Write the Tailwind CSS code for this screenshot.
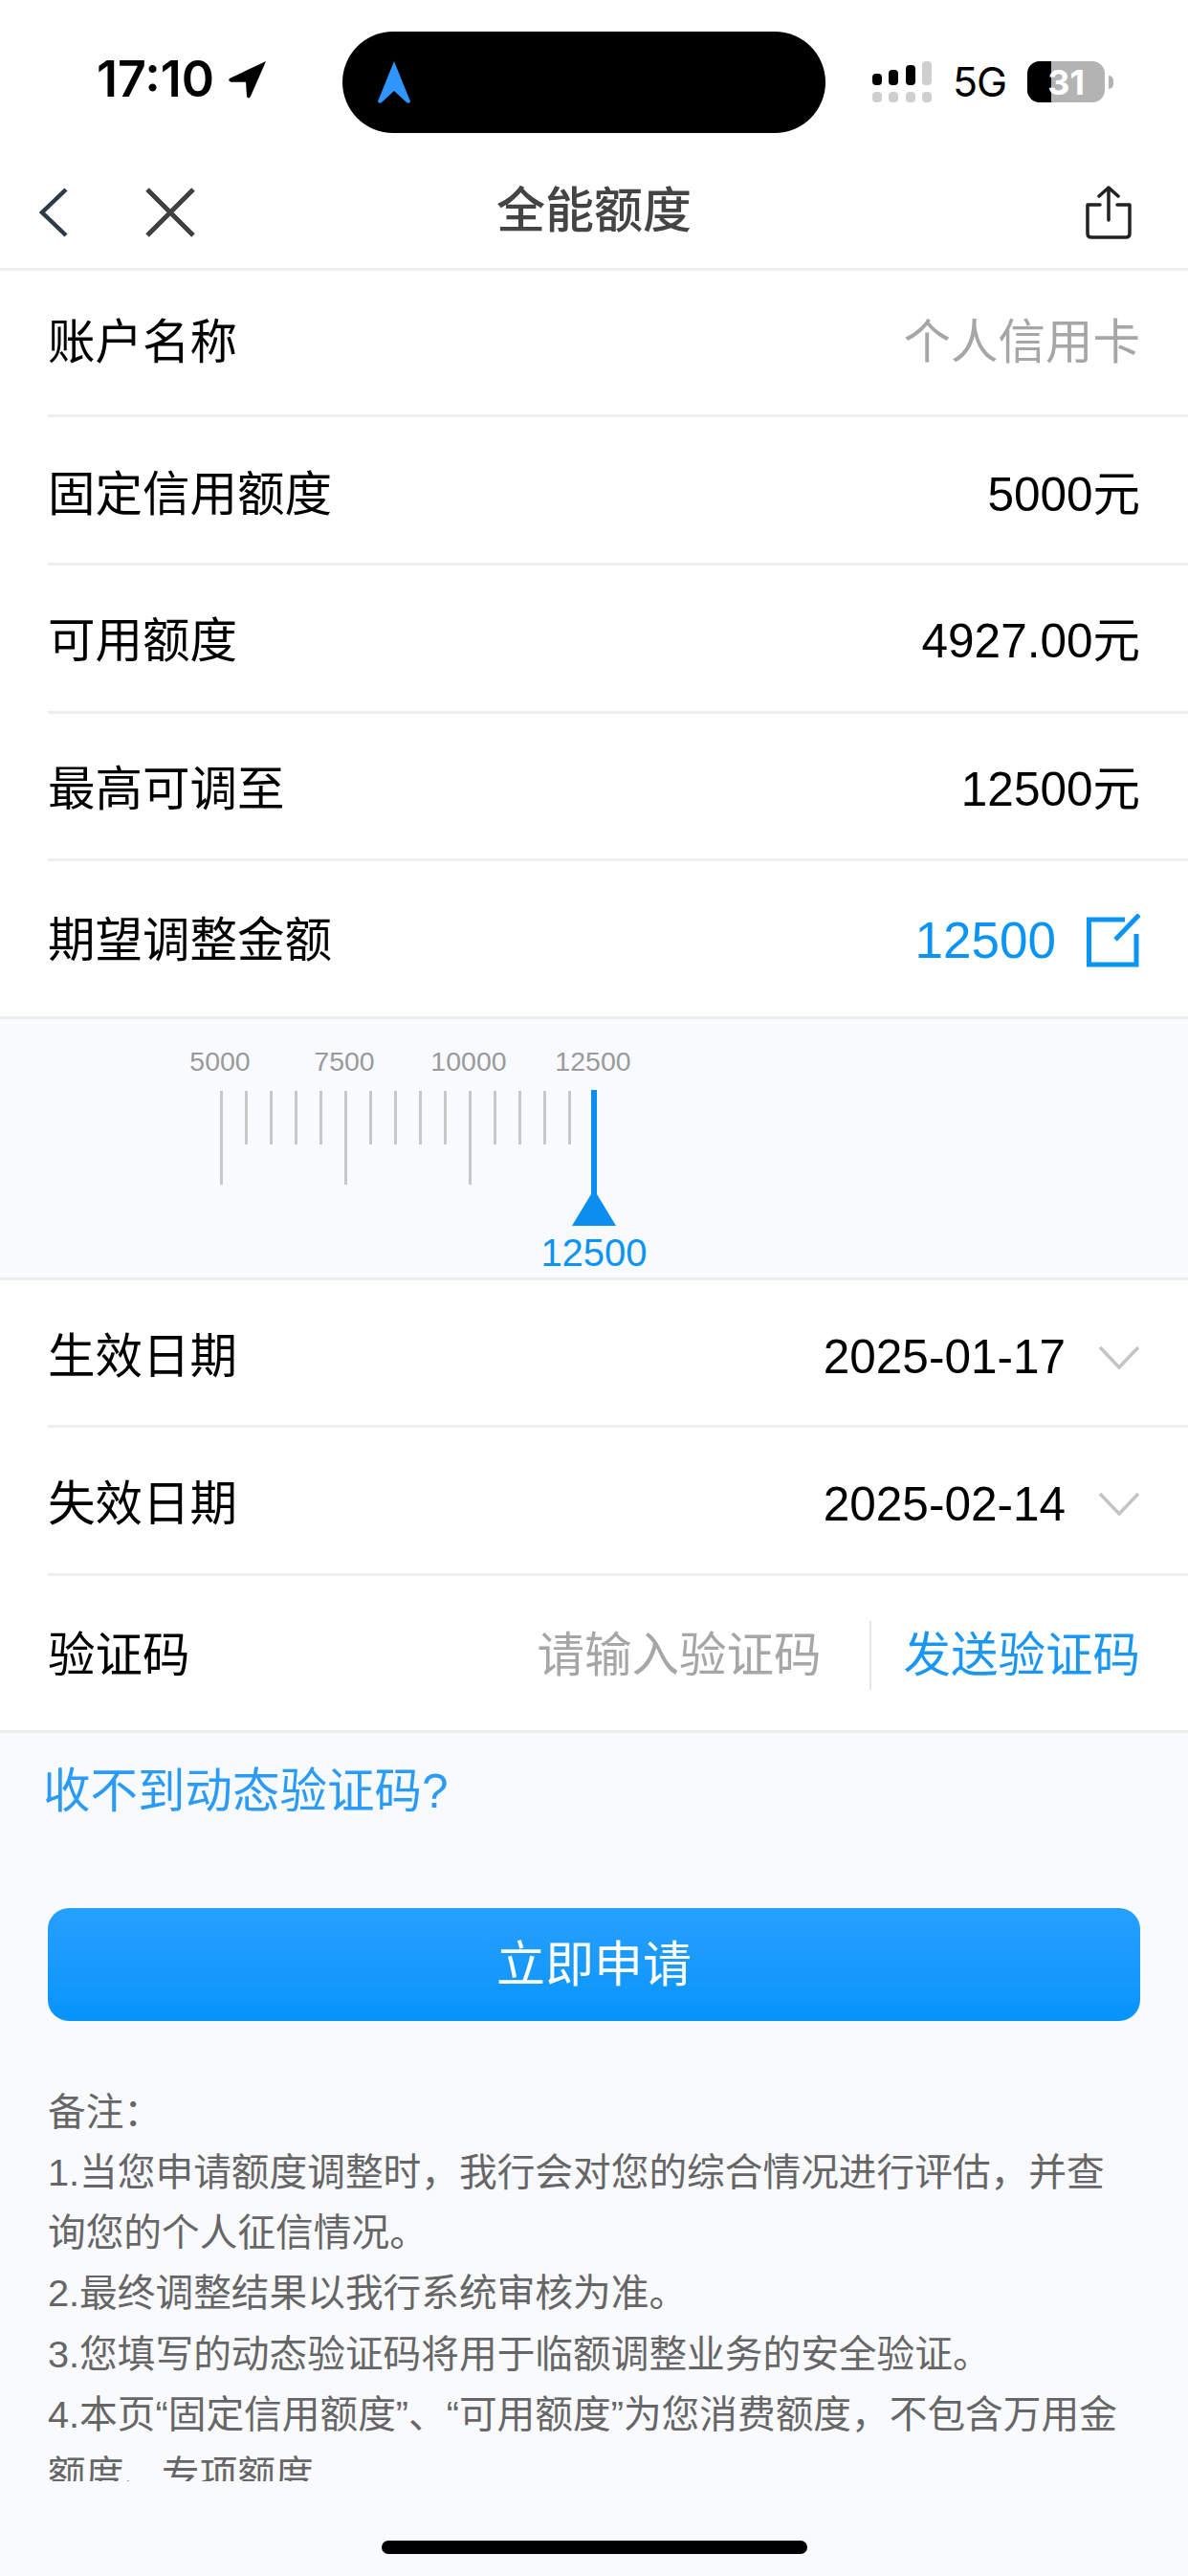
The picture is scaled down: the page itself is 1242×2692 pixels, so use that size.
<!DOCTYPE html>
<html lang="zh-CN">
<head>
    <meta charset="UTF-8">
    <title>全能额度</title>
    <script src="https://cdn.jsdelivr.net/npm/@tailwindcss/browser@4"></script>
</head>
<body class="m-0 bg-[#f9fafe] font-['Liberation_Sans','Noto_Sans_CJK_SC',sans-serif] text-black">
<div class="relative w-[1242px] h-[2692px] overflow-hidden flex flex-col">

    <!-- Status bar -->
    <div class="bg-white h-[165px] shrink-0 flex items-center pl-[101px] pr-[78px] pt-[6px] font-['Inter',sans-serif]">
        <span class="text-[52px] font-semibold leading-none w-[138px] -mt-[6px]">17:10</span>
        <svg class="w-[42px] h-[42px] -ml-[1px] -mt-[6px]" viewBox="0 0 44 44"><path d="M42 2 L2 21 Q0 24 4 25 L20 25 L21 41 Q23 44 25 41 Z" fill="#000"/></svg>
        <div class="ml-[78px] w-[506px] h-[106px] rounded-[53px] bg-black flex items-center pl-[34px]">
            <svg class="w-[40px] h-[46px]" viewBox="0 0 40 46"><path d="M20 1 L37 43 Q36 46 33 44 L20 32 L7 44 Q4 46 3 43 Z" fill="#2f96ff"/></svg>
        </div>
        <div class="ml-[49px] w-[62px] h-[43px] flex justify-between">
            <div class="w-[10px] h-full flex flex-col justify-end gap-[7px]"><div class="h-[12px] rounded-[4px] bg-black"></div><div class="h-[11px] rounded-[4px] bg-[#cfcfcf]"></div></div>
            <div class="w-[10px] h-full flex flex-col justify-end gap-[7px]"><div class="h-[16px] rounded-[4px] bg-black"></div><div class="h-[11px] rounded-[4px] bg-[#cfcfcf]"></div></div>
            <div class="w-[10px] h-full flex flex-col justify-end gap-[7px]"><div class="h-[21px] rounded-[4px] bg-black"></div><div class="h-[11px] rounded-[4px] bg-[#cfcfcf]"></div></div>
            <div class="w-[10px] h-full flex flex-col justify-end gap-[7px]"><div class="h-[25px] rounded-[4px] bg-[#cfcfcf]"></div><div class="h-[11px] rounded-[4px] bg-[#cfcfcf]"></div></div>
        </div>
        <span class="ml-[22px] text-[43px] font-normal leading-none tracking-[-1px]">5G</span>
        <div class="relative ml-[22px] w-[81px] h-[43px] rounded-[13px] overflow-hidden bg-[#b3b3b3] flex items-center justify-center">
            <div class="absolute left-0 top-0 bottom-0 w-[25px] bg-black"></div>
            <span class="relative text-white text-[36px] font-bold leading-none">31</span>
        </div>
        <div class="ml-[4px] w-[5px] h-[14px] rounded-r-[5px] bg-[#b3b3b3]"></div>
    </div>

    <!-- Nav bar -->
    <div class="relative bg-white h-[118px] shrink-0 flex items-center justify-between pl-[40px] pr-[58px] pb-[2px] border-b-[3px] border-[#eeeeee]">
        <div class="flex items-center gap-[80px]">
            <svg class="w-[32px] h-[52px]" viewBox="0 0 32 52" fill="none" stroke="#2c3a4b" stroke-width="4.5"><path d="M29 2 L4 26 L29 50"/></svg>
            <svg class="w-[52px] h-[52px]" viewBox="0 0 52 52" fill="none" stroke="#404040" stroke-width="5"><path d="M2 2 L50 50 M50 2 L2 50"/></svg>
        </div>
        <span class="absolute left-0 right-0 text-center text-[#444444] text-[51px] font-medium leading-none pb-[2px]">全能额度</span>
        <svg class="w-[50px] h-[56px]" viewBox="0 0 50 56" fill="none" stroke="#222" stroke-width="3.5" stroke-linecap="round" stroke-linejoin="round"><path d="M25 2 L25 36 M15 11 L25 2 L35 11 M16 20 L3 20 L3 50 Q3 54 7 54 L43 54 Q47 54 47 50 L47 20 L34 20"/></svg>
    </div>

    <!-- Form rows -->
    <div class="bg-white pl-[50px] shrink-0">
        <div class="h-[153px] flex items-center justify-between pr-[50px] text-[49.5px] border-b-[3px] border-[#eeeeee]"><span>账户名称</span><span class="text-[#a6a6a6]">个人信用卡</span></div>
        <div class="h-[155px] flex items-center justify-between pr-[50px] pt-[10px] text-[49.5px] border-b-[3px] border-[#eeeeee]"><span>固定信用额度</span><span>5000元</span></div>
        <div class="h-[155px] flex items-center justify-between pr-[50px] pt-[6px] text-[49.5px] border-b-[3px] border-[#eeeeee]"><span>可用额度</span><span>4927.00元</span></div>
        <div class="h-[154px] flex items-center justify-between pr-[50px] pt-[8px] text-[49.5px] border-b-[3px] border-[#eeeeee]"><span>最高可调至</span><span>12500元</span></div>
        <div class="h-[162px] flex items-center justify-between pr-[50px] pt-[4px] text-[49.5px]">
            <span>期望调整金额</span>
            <div class="flex items-center gap-[32px] text-[#0a94f5] text-[53px]">
                <span>12500</span>
                <svg class="w-[56px] h-[56px]" viewBox="0 0 56 56" fill="none" stroke="#0a94f5" stroke-width="5"><path d="M40 6 L2.5 6 L2.5 53 L52 53 L52 21 M30 27 L55 1"/></svg>
            </div>
        </div>
    </div>

    <!-- Ruler -->
    <div class="relative h-[276px] shrink-0 border-y-[3px] border-[#eeeeee] pt-[30px]">
        <div class="flex pl-[165px] w-[700px] text-[28.5px] text-[#9a9a9a] leading-none">
            <span class="w-[130px] text-center">5000</span>
            <span class="w-[130px] text-center">7500</span>
            <span class="w-[130px] text-center">10000</span>
            <span class="w-[130px] text-center">12500</span>
        </div>
        <div class="flex items-start gap-[23px] pl-[230px] mt-[16px]">
            <div class="w-[3px] h-[98px] bg-[#c8c8c8]"></div>
            <div class="w-[3px] h-[56px] bg-[#c8c8c8]"></div>
            <div class="w-[3px] h-[56px] bg-[#c8c8c8]"></div>
            <div class="w-[3px] h-[56px] bg-[#c8c8c8]"></div>
            <div class="w-[3px] h-[56px] bg-[#c8c8c8]"></div>
            <div class="w-[3px] h-[98px] bg-[#c8c8c8]"></div>
            <div class="w-[3px] h-[56px] bg-[#c8c8c8]"></div>
            <div class="w-[3px] h-[56px] bg-[#c8c8c8]"></div>
            <div class="w-[3px] h-[56px] bg-[#c8c8c8]"></div>
            <div class="w-[3px] h-[56px] bg-[#c8c8c8]"></div>
            <div class="w-[3px] h-[98px] bg-[#c8c8c8]"></div>
            <div class="w-[3px] h-[56px] bg-[#c8c8c8]"></div>
            <div class="w-[3px] h-[56px] bg-[#c8c8c8]"></div>
            <div class="w-[3px] h-[56px] bg-[#c8c8c8]"></div>
            <div class="w-[3px] h-[56px] bg-[#c8c8c8]"></div>
        </div>
        <!-- pointer stays centred over the ruler -->
        <div class="absolute left-0 right-0 top-[74px] flex flex-col items-center">
            <div class="w-[6px] h-[112px] bg-[#0a8ff0]"></div>
            <svg class="w-[46px] h-[38px] -mt-[8px]" viewBox="0 0 46 38"><path d="M23 0 L46 38 L0 38 Z" fill="#0a8ff0"/></svg>
            <span class="text-[40px] text-[#0a94f5] leading-none mt-[8px]">12500</span>
        </div>
    </div>

    <!-- Dates and code -->
    <div class="bg-white pl-[50px] shrink-0">
        <div class="h-[154px] flex items-center justify-between pr-[50px] pt-[10px] text-[49.5px] border-b-[3px] border-[#eeeeee]">
            <span>生效日期</span>
            <div class="flex items-center gap-[34px]"><span>2025-01-17</span>
                <svg class="w-[44px] h-[26px]" viewBox="0 0 44 26" fill="none" stroke="#c4c4c4" stroke-width="3.5"><path d="M2 2 L22 23 L42 2"/></svg></div>
        </div>
        <div class="h-[155px] flex items-center justify-between pr-[50px] pt-[8px] text-[49.5px] border-b-[3px] border-[#eeeeee]">
            <span>失效日期</span>
            <div class="flex items-center gap-[34px]"><span>2025-02-14</span>
                <svg class="w-[44px] h-[26px]" viewBox="0 0 44 26" fill="none" stroke="#c4c4c4" stroke-width="3.5"><path d="M2 2 L22 23 L42 2"/></svg></div>
        </div>
        <div class="h-[161px] flex items-center pr-[50px] pt-[5px] text-[49.5px]">
            <span>验证码</span>
            <span class="ml-auto text-[#a6a6a6]">请输入验证码</span>
            <div class="w-[2px] h-[72px] bg-[#e6e6e6] ml-[50px] mr-[34px]"></div>
            <span class="text-[#1a97f5]">发送验证码</span>
        </div>
    </div>

    <!-- Lower part -->
    <div class="flex-1 min-h-0 border-t-[3px] border-[#eeeeee] flex flex-col">
        <p class="text-[49.5px] text-[#2a9bf8] leading-none pl-[45px] pt-[36px]">收不到动态验证码?</p>
        <button class="mt-[97px] mx-[50px] h-[118px] shrink-0 rounded-[22px] pt-[4px] bg-gradient-to-b from-[#26a0ff] to-[#0494fb] text-white text-[51px]">立即申请</button>
        <div class="mt-[64px] ml-[50px] w-[1142px] h-[417px] overflow-hidden text-[39.7px] leading-[63.3px] text-[#666666]">
            <p>备注：</p>
            <p>1.当您申请额度调整时，我行会对您的综合情况进行评估，并查询您的个人征信情况。</p>
            <p>2.最终调整结果以我行系统审核为准。</p>
            <p>3.您填写的动态验证码将用于临额调整业务的安全验证。</p>
            <p>4.本页“固定信用额度”、“可用额度”为您消费额度，不包含万用金额度、专项额度</p>
        </div>
    </div>

    <!-- Home indicator -->
    <div class="absolute left-[399px] bottom-[23px] w-[445px] h-[14px] rounded-full bg-black"></div>
</div>
</body>
</html>
